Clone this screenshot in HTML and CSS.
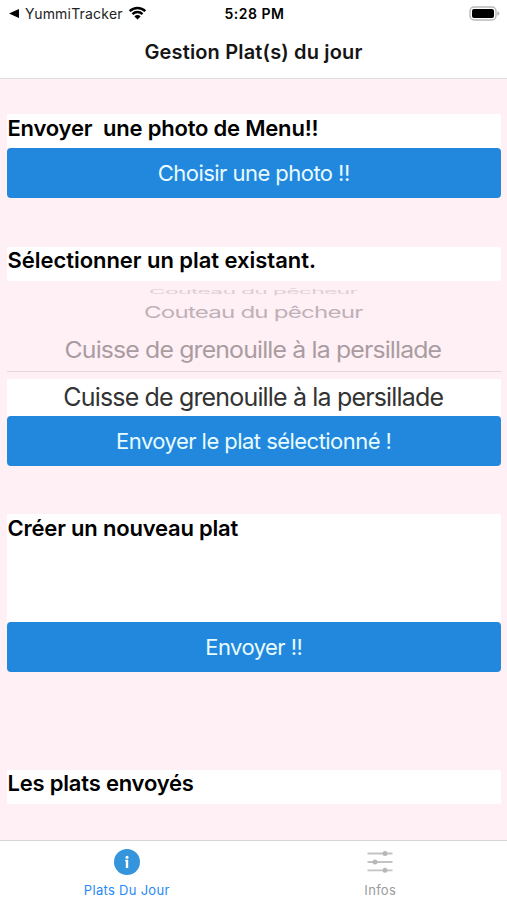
FILE: index.html
```
<!DOCTYPE html>
<html lang="fr">
<head>
  <meta charset="UTF-8" />
  <meta name="viewport" content="width=device-width, initial-scale=1.0"/>
  <title>Gestion Plat(s) du jour</title>
  <link rel="stylesheet" href="styles.css">
</head>
<body>

<header>
  <div class="status-bar">
    <div class="back-app">
      <svg width="10" height="9" viewBox="0 0 10 9"><path d="M0 4.5 10 0v9z"/></svg>
      <span class="app-name">YummiTracker</span>
      <svg class="wifi" width="19" height="14" viewBox="0 0 18 14">
        <path d="M1.2 5.1a11.2 11.2 0 0 1 15.6 0M4 8.1a7.2 7.2 0 0 1 10 0" fill="none" stroke="#000" stroke-width="2.5"/>
        <path d="M9 13.6 5.9 10.4a4.4 4.4 0 0 1 6.2 0z"/>
      </svg>
    </div>
    <span class="time">5:28 PM</span>
    <svg class="battery" width="31" height="15" viewBox="0 0 31 15">
      <rect x="1" y="1" width="26" height="13" rx="4" fill="#fff" stroke="#b9b9b9" stroke-width="1.4"/>
      <rect x="3" y="3" width="22" height="9" rx="2"/>
      <path d="M28.4 5.2q2 .8 2 2.3t-2 2.3z" fill="#b0b0b0"/>
    </svg>
  </div>
  <h1>Gestion Plat(s) du jour</h1>
</header>

<main>
  <section class="photo">
    <h2>Envoyer&nbsp; une photo de Menu!!</h2>
    <button>Choisir une photo !!</button>
  </section>

  <section class="existing">
    <h2>Sélectionner un plat existant.</h2>
    <div class="picker">
      <div class="row far"><span>Couteau du pêcheur</span></div>
      <div class="row mid"><span>Couteau du pêcheur</span></div>
      <div class="row near"><span>Cuisse de grenouille à la persillade</span></div>
      <div class="row selected"><span>Cuisse de grenouille à la persillade</span></div>
    </div>
    <button>Envoyer le plat sélectionné !</button>
  </section>

  <section class="create">
    <h2>Créer un nouveau plat</h2>
    <div class="new-dish"></div>
    <button>Envoyer !!</button>
  </section>

  <section class="sent">
    <h2>Les plats envoyés</h2>
  </section>
</main>

<nav>
  <div class="tab active">
    <svg width="28" height="28" viewBox="0 0 28 28">
      <circle cx="14" cy="14" r="13" fill="#3494dc"/>
      <circle cx="14" cy="9.2" r="1.5" fill="#fff"/>
      <path d="M12.2 11.8h3v8.2h-2.4v-6.8h-.6z" fill="#fff"/>
    </svg>
    <span>Plats Du Jour</span>
  </div>
  <div class="tab">
    <svg width="28" height="28" viewBox="0 0 28 28" stroke="#c3c3c3" stroke-width="1.8" fill="#b8b8b8">
      <path d="M1.5 5.5h25M1.5 14h25M1.5 22.3h25"/>
      <g stroke="none"><circle cx="19" cy="5.5" r="2.5"/><circle cx="9" cy="14" r="2.5"/><circle cx="19" cy="22.3" r="2.5"/></g>
    </svg>
    <span>Infos</span>
  </div>
</nav>

</body>
</html>
```
FILE: styles.css
```
* {
  box-sizing: border-box;
}

body {
  margin: 0;
  height: 900px;
  display: flex;
  flex-direction: column;
  overflow: hidden;
  background: #fff0f5;
  font-family: Inter, "Liberation Sans", sans-serif;
  color: #000;
}

h1, h2 {
  margin: 0;
}

span {
  white-space: nowrap;
}

header {
  height: 79px;
  background: #fff;
  border-bottom: 1px solid #dedede;
}

.status-bar {
  height: 27px;
  padding: 0 7px 0 9px;
  display: grid;
  grid-template-columns: 1fr auto 1fr;
  align-items: center;
  font-size: 14px;
}

.back-app {
  display: flex;
  align-items: center;
}

.app-name {
  margin: 0 5px 0 6px;
  color: #222;
  letter-spacing: 0.2px;
}

.wifi {
  margin-top: -2px;
}

.time {
  font-weight: 600;
  letter-spacing: 0.5px;
}

.battery {
  justify-self: end;
}

h1 {
  height: 50px;
  display: flex;
  align-items: center;
  justify-content: center;
  font-size: 20px;
  font-weight: 600;
  letter-spacing: 0.16px;
  color: #151515;
}

main {
  flex: 1;
  padding: 35px 6.5px 0 7px;
}

h2 {
  height: 34px;
  padding-left: 0.5px;
  background: #fff;
  font-size: 22px;
  line-height: 28px;
  font-weight: 600;
  letter-spacing: -0.2px;
}

button {
  display: block;
  width: 100%;
  height: 50px;
  padding: 0;
  border: 0;
  border-radius: 4px;
  background: #2188dd;
  color: #e8fbff;
  font-family: inherit;
  font-size: 22px;
  line-height: 51px;
  letter-spacing: -0.54px;
}

.photo {
  margin-bottom: 49px;
}

.existing {
  margin-bottom: 48px;
}

.existing h2 {
  line-height: 27px;
  letter-spacing: -0.04px;
}

.picker {
  height: 135px;
  overflow: hidden;
  text-align: center;
  font-size: 25px;
  letter-spacing: -0.84px;
}

.row span {
  display: inline-block;
  margin-left: -1px;
}

.far {
  height: 20px;
  line-height: 22px;
  color: #ddced3;
}

/* rows flatten as they turn away on the wheel */
.far span {
  transform: scale(0.92, 0.26);
}

.mid {
  height: 22px;
  line-height: 23px;
  color: #c0b1b7;
}

.mid span {
  transform: scale(0.965, 0.65);
}

.near {
  height: 49px;
  line-height: 54px;
  border-bottom: 1px solid #e4d7dc;
  color: #a99ca1;
}

.near span {
  transform: scale(0.992, 0.9);
}

.selected {
  height: 37px;
  margin-top: 7px;
  background: #fff;
  line-height: 37px;
  color: #333;
}

.create {
  margin-bottom: 98px;
}

.new-dish {
  height: 74px;
  background: #fff;
}

.sent h2 {
  line-height: 26px;
}

nav {
  height: 60px;
  display: flex;
  background: #fff;
  border-top: 1px solid #d5d3d4;
}

.tab {
  flex: 1;
  padding-top: 7px;
  display: flex;
  flex-direction: column;
  align-items: center;
  gap: 6px;
  font-size: 13px;
  line-height: 16px;
  letter-spacing: 0.3px;
  color: #9b9b9b;
}

.active {
  color: #2789f5;
}
```
